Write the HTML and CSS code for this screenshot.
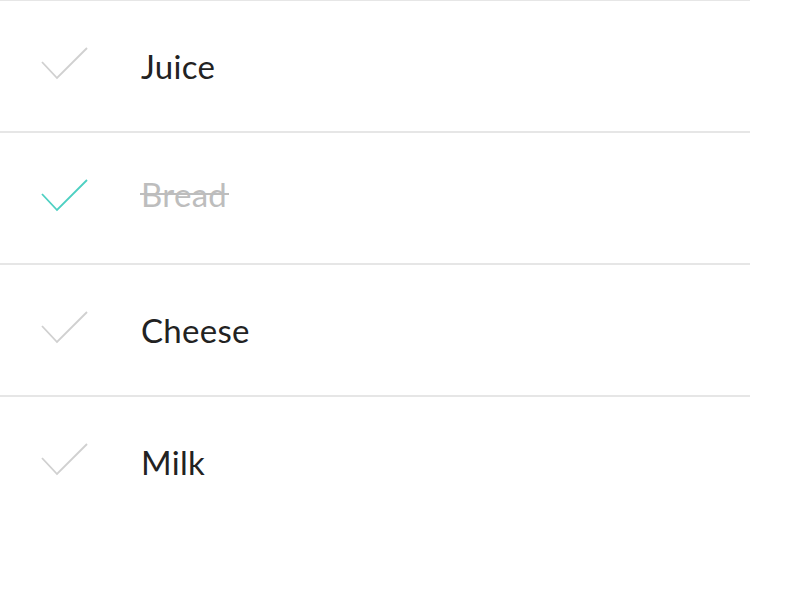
FILE: index.html
```html
<!DOCTYPE html>
<html>
<head>
<meta charset="utf-8">
<link rel="stylesheet" href="styles.css">
</head>
<body>
<ul class="list">
  <li class="item">
    <svg class="check" width="50" height="36" viewBox="0 0 50 36"><polyline points="4,15 19,31 49,1"/></svg>
    <span class="label">Juice</span>
  </li>
  <li class="item done">
    <svg class="check" width="50" height="36" viewBox="0 0 50 36"><polyline points="4,15 19,31 49,1"/></svg>
    <span class="label">Bread</span>
  </li>
  <li class="item">
    <svg class="check" width="50" height="36" viewBox="0 0 50 36"><polyline points="4,15 19,31 49,1"/></svg>
    <span class="label">Cheese</span>
  </li>
  <li class="item">
    <svg class="check" width="50" height="36" viewBox="0 0 50 36"><polyline points="4,15 19,31 49,1"/></svg>
    <span class="label">Milk</span>
  </li>
</ul>
</body>
</html>
```
FILE: styles.css
```css
html, body {
  margin: 0;
  padding: 0;
  background: #fff;
}
.list {
  list-style: none;
  margin: -1px 0 0 0;
  padding: 0;
  width: 750px;
  font-family: Lato, "Liberation Sans", sans-serif;
}
.item {
  box-sizing: border-box;
  height: 132px;
  border-top: 2px solid #e6e6e6;
  display: flex;
  align-items: center;
  padding-left: 38px;
}
.check {
  flex: none;
  margin-top: -3px;
  fill: none;
  stroke: #d0d0d0;
  stroke-width: 1.8;
}
.label {
  position: relative;
  margin-left: 53px;
  font-size: 33px;
  font-weight: 400;
  color: #222;
  letter-spacing: 0.3px;
}
.done .check {
  stroke: #4dd0c2;
}
.done .label {
  color: #bdbdbd;
  margin-bottom: 8px;
}
.done .label::after {
  content: "";
  position: absolute;
  left: -1px;
  right: -2px;
  top: 50%;
  margin-top: -1px;
  height: 2px;
  background: #bdbdbd;
}
```
